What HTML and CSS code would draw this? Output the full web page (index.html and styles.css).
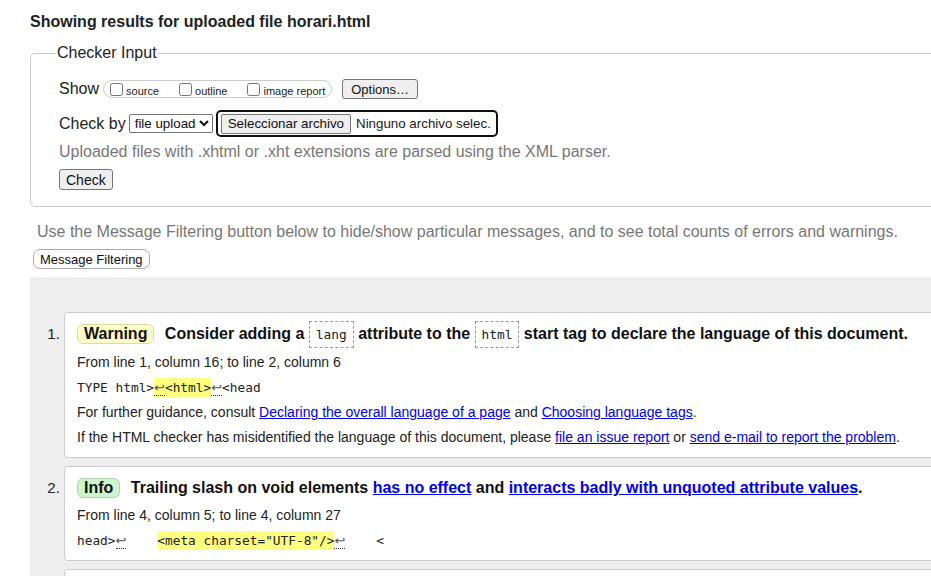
FILE: index.html
```html
<!DOCTYPE html>
<html lang="en">
<head>
<meta charset="utf-8">
<title>Showing results for horari.html - Nu Html Checker</title>
<link rel="stylesheet" href="styles.css">
</head>
<body>
<div class="page">
  <h2 class="results-title">Showing results for uploaded file horari.html</h2>
  <form class="checker-form">
    <fieldset class="checker-input">
      <legend>Checker Input</legend>
      <div class="row show-row">
        <span class="row-label">Show</span>
        <span class="show-group">
          <label class="opt"><input type="checkbox"><span class="opt-text">source</span></label>
          <label class="opt"><input type="checkbox"><span class="opt-text">outline</span></label>
          <label class="opt"><input type="checkbox"><span class="opt-text">image report</span></label>
        </span>
        <button type="button" class="btn btn-options">Options…</button>
      </div>
      <div class="row check-row">
        <span class="row-label label-check">Check by</span>
        <select class="doc-select"><option>file upload</option></select>
        <span class="file-input"><span class="btn btn-file">Seleccionar archivo</span><span class="file-name">Ninguno archivo selec.</span></span>
      </div>
      <p class="hint">Uploaded files with .xhtml or .xht extensions are parsed using the XML parser.</p>
      <button type="button" class="btn btn-check">Check</button>
    </fieldset>
  </form>
  <p class="filter-hint">Use the Message Filtering button below to hide/show particular messages, and to see total counts of errors and warnings.</p>
  <button type="button" class="btn btn-filter">Message Filtering</button>
  <div class="results">
    <ol class="messages">
      <li class="msg">
        <p class="msg-title"><span class="badge badge-warning">Warning</span> Consider adding a <code class="tag">lang</code> attribute to the <code class="tag">html</code> start tag to declare the language of this document.</p>
        <p class="msg-line">From line 1, column 16; to line 2, column 6</p>
        <p class="msg-line extract"><code>TYPE html&gt;<span class="hl"><span class="lf">↩</span>&lt;html&gt;</span><span class="lf">↩</span>&lt;head</code></p>
        <p class="msg-line">For further guidance, consult <a href="#">Declaring the overall language of a page</a> and <a href="#">Choosing language tags</a>.</p>
        <p class="msg-line">If the HTML checker has misidentified the language of this document, please <a href="#">file an issue report</a> or <a href="#">send e-mail to report the problem</a>.</p>
      </li>
      <li class="msg">
        <p class="msg-title"><span class="badge badge-info">Info</span> Trailing slash on void elements <a href="#">has no effect</a> and <a href="#">interacts badly with unquoted attribute values</a>.</p>
        <p class="msg-line">From line 4, column 5; to line 4, column 27</p>
        <p class="msg-line extract"><code>head&gt;<span class="lf">↩</span>    <span class="hl">&lt;meta charset="UTF-8"/&gt;</span><span class="lf">↩</span>    &lt;</code></p>
      </li>
      <li class="msg">
        <p class="msg-title"><span class="badge badge-info">Info</span> Trailing slash on void elements <a href="#">has no effect</a> and <a href="#">interacts badly with unquoted attribute values</a>.</p>
        <p class="msg-line">From line 5, column 5; to line 5, column 74</p>
      </li>
    </ol>
  </div>
</div>
</body>
</html>
```

FILE: styles.css
```css
html {
  overflow: hidden;
}

body {
  margin: 0;
  background: #fff;
  color: #222;
  font-family: "Liberation Sans", Arial, sans-serif;
  font-size: 16px;
}

.page {
  width: 1150px;
  padding: 13px 0 0 30px;
}

.results-title {
  margin: 0 0 13px;
  font-size: 16px;
  line-height: 18px;
  font-weight: bold;
}

.checker-form {
  margin: 0;
}

.checker-input {
  margin: 0;
  width: 1000px;
  border: 1px solid #ccc;
  border-radius: 5px;
  padding: 16px 28px 16px;
}

.checker-input legend {
  padding: 0 1px;
  margin-left: -3px;
  font-size: 16px;
  line-height: 18px;
  color: #222;
}

.row {
  display: flex;
  align-items: center;
}

.show-row {
  height: 22px;
}

.row-label {
  font-size: 16px;
  line-height: 18px;
  margin-right: 4px;
}

.label-check {
  margin-right: 3px;
}

.show-group {
  display: inline-flex;
  align-items: center;
  box-sizing: border-box;
  height: 18px;
  border: 1px solid #ccc;
  border-radius: 9px;
  padding: 0 6px 0 2px;
  font-size: 11px;
}

.opt {
  display: inline-flex;
  align-items: flex-end;
  margin-right: 16px;
  line-height: 12px;
}

.opt:last-child {
  margin-right: 0;
}

.opt input {
  width: 13px;
  height: 13px;
  margin: 0 3px 0 4px;
}

.opt-text {
  position: relative;
  top: 1px;
}

.btn {
  display: inline-flex;
  align-items: center;
  box-sizing: border-box;
  font-family: "Liberation Sans", Arial, sans-serif;
  color: #111;
  background: #efefef;
  border: 1px solid #767676;
  border-radius: 3px;
  padding: 0 6px;
}

.btn-options {
  height: 20px;
  margin-left: 10px;
  padding: 0 8px;
  font-size: 13px;
}

.check-row {
  margin-top: 10px;
  height: 27px;
}

.doc-select {
  box-sizing: border-box;
  width: 84px;
  height: 19px;
  margin: 0 3px 0 0;
  padding: 0 0 0 1px;
  font-family: "Liberation Sans", Arial, sans-serif;
  font-size: 13.33px;
  color: #111;
  background: #fff;
  border: 1px solid #767676;
  border-radius: 2px;
}

.file-input {
  display: inline-flex;
  align-items: center;
  box-sizing: border-box;
  height: 27px;
  border: 2px solid #111;
  border-radius: 5px;
  padding: 0 5px 0 3px;
  font-size: 13.33px;
}

.btn-file {
  height: 20px;
  font-size: 13.33px;
  border-radius: 2px;
}

.file-name {
  margin-left: 5px;
  color: #1a1a1a;
}

.hint {
  margin: 6px 0 0;
  line-height: 18px;
  color: #777;
}

.btn-check {
  margin-top: 8px;
  height: 21px;
  font-size: 14px;
}

.filter-hint {
  margin: 16px 0 0 7px;
  line-height: 18px;
  color: #777;
}

.btn-filter {
  margin: 8px 0 0 3px;
  height: 20px;
  font-size: 13px;
  background: #fcfcfc;
  border-color: #aaa;
  border-radius: 7px;
}

.results {
  margin-top: 8px;
  background: #eee;
  padding: 35px 0 0 34px;
  height: 400px;
}

.messages {
  margin: 0;
  padding: 0;
  list-style: decimal outside;
}

.msg {
  background: #fff;
  border: 1px solid #ccc;
  border-radius: 4px;
  padding: 10px 12px 7px;
  margin-bottom: 8px;
  font-size: 14px;
}

.msg::marker {
  font-size: 15px;
  color: #222;
}

.msg-title {
  margin: 0 0 4px;
  font-size: 16px;
  line-height: 22px;
  font-weight: bold;
  color: #111;
}

.badge {
  display: inline-block;
  padding: 0 6px;
  border: 1px solid #ccc;
  border-radius: 6px;
  line-height: 18px;
  margin-right: 6px;
}

.badge-warning {
  background: #ffffc8;
  border-color: #dcdca0;
}

.badge-info {
  background: #ccf5cc;
  border-color: #b4d2b4;
}

.tag {
  font-family: "DejaVu Sans Mono", monospace;
  font-size: 12.8px;
  font-weight: normal;
  color: #222;
  border: 1px dashed #999;
  padding: 5px 6px;
  background: #fff;
}

.msg-line {
  margin: 0;
  line-height: 25px;
  font-size: 14px;
}

.extract code {
  font-family: "DejaVu Sans Mono", monospace;
  font-size: 12.8px;
  white-space: pre;
  color: #222;
}

.hl {
  background: #ffff80;
  padding: 2px 0;
}

.lf {
  font-family: "DejaVu Sans", sans-serif;
  font-size: 13px;
  color: #555;
  border-bottom: 1px dotted #333;
}

a {
  color: #0000ee;
  text-decoration: underline;
}
```
